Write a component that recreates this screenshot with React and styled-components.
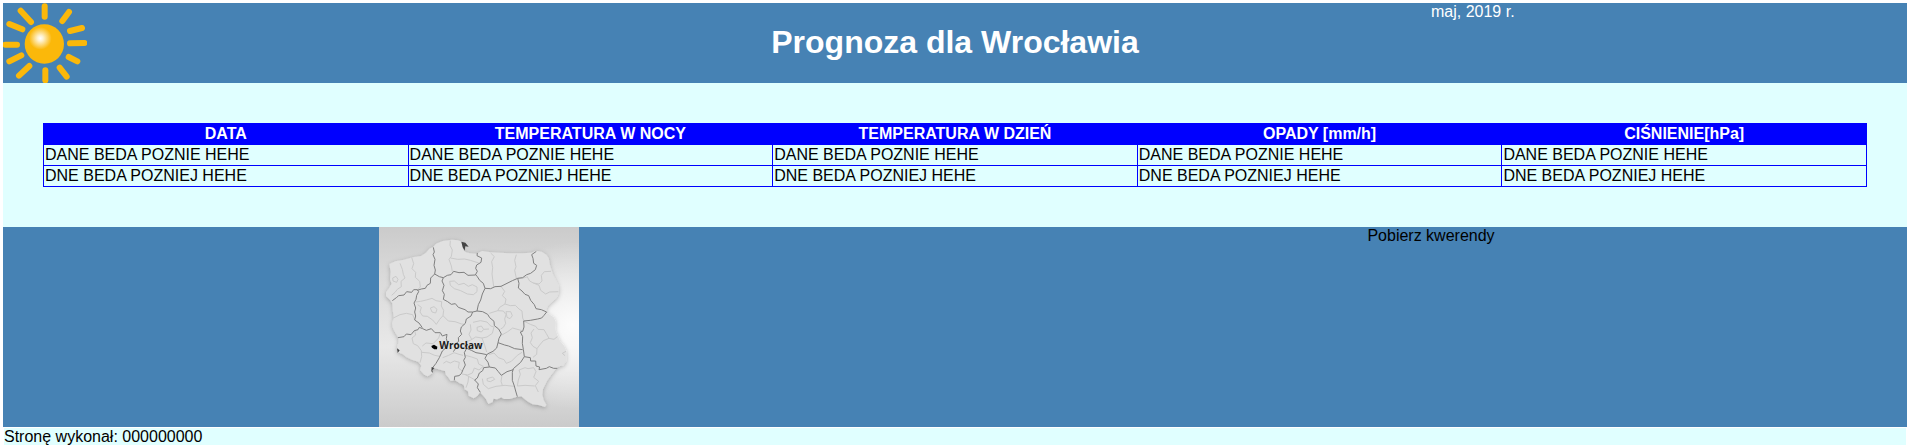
import React from "react";
import styled, { createGlobalStyle } from "styled-components";

const GlobalStyle = createGlobalStyle`
  body {
    margin: 3px 3px 0;
    background: #ffffff;
    font: 16px/18px "Liberation Sans", Arial, Helvetica, sans-serif;
    color: #000000;
  }
`;

const Banner = styled.header`
  display: grid;
  grid-template-columns: 1fr 2fr 1fr;
  height: 80px;
  background: steelblue;
  color: #ffffff;
`;

const Title = styled.h1`
  margin: 21px 0;
  font-size: 32px;
  line-height: 37px;
  text-align: center;
`;

const Main = styled.main`
  padding: 40px;
  background: lightcyan;
`;

const ForecastTable = styled.table`
  width: 100%;
  table-layout: fixed;
  border-collapse: collapse;
`;

const HeadCell = styled.th`
  padding: 1px;
  border: 1px solid blue;
  background: blue;
  color: #ffffff;
`;

const Cell = styled.td`
  padding: 1px;
  border: 1px solid blue;
`;

const Panels = styled.section`
  display: grid;
  grid-template-columns: 1fr 1fr;
  background: steelblue;
`;

const Panel = styled.div`
  display: flex;
  justify-content: center;
  align-items: flex-start;
`;

const DownloadLink = styled.a`
  color: inherit;
  text-decoration: none;
`;

const PageFooter = styled.footer`
  border: 1px solid #ffffff;
  border-bottom: 0;
  background: lightcyan;
  line-height: 17px;
`;

const Drawing = styled.svg`
  display: block;
`;

const rays = [
  [134, 19, 134, 50],
  [207, 36, 187, 63],
  [246, 84, 210, 93],
  [253, 129, 210, 130],
  [232, 184, 206, 171],
  [200, 230, 179, 203],
  [136, 241, 136, 211],
  [57, 227, 88, 198],
  [28, 184, 64, 166],
  [16, 134, 51, 134],
  [28, 72, 67, 88],
  [62, 32, 93, 66],
];

function Sun() {
  return (
    <Drawing width="84" height="80" viewBox="9 9 252 240" role="img" aria-label="Słońce">
      <defs>
        <radialGradient id="sunGlow" gradientUnits="userSpaceOnUse" cx="121" cy="115" r="34">
          <stop offset="0" stopColor="#ffffff" />
          <stop offset="0.25" stopColor="#fef2d0" />
          <stop offset="1" stopColor="#fbb80a" />
        </radialGradient>
      </defs>
      <g stroke="#fbb80a" strokeWidth="18" strokeLinecap="round">
        {rays.map(([x1, y1, x2, y2]) => (
          <line key={`${x1}-${y1}`} x1={x1} y1={y1} x2={x2} y2={y2} />
        ))}
      </g>
      <circle cx="133" cy="132" r="59" fill="url(#sunGlow)" />
    </Drawing>
  );
}

const outline =
  "M40 126 L58 118 L84 113 L110 106 L135 102 L150 92 L160 80 L172 74 L180 65 L200 57 L228 53 L246 55 L256 59 L260 74 L264 86 L270 91 L282 94 L302 95 L318 87 L345 91 L400 94 L440 94 L466 92 L480 86 L497 89 L511 98 L518 108 L522 130 L530 155 L541 178 L548 192 L549 210 L543 226 L530 238 L517 249 L510 262 L513 273 L533 286 L539 300 L537 322 L544 340 L552 357 L565 373 L572 390 L571 416 L562 430 L545 434 L530 452 L514 475 L501 501 L499 518 L503 534 L511 548 L507 555 L488 549 L470 547 L454 538 L436 523 L421 525 L401 531 L384 531 L376 526 L363 532 L352 530 L350 540 L337 546 L330 532 L322 521 L312 511 L304 522 L293 529 L278 521 L276 508 L266 502 L263 488 L250 483 L238 475 L224 477 L218 467 L210 458 L207 447 L188 442 L173 437 L168 445 L170 453 L155 463 L145 458 L132 444 L136 431 L127 419 L108 413 L90 404 L80 396 L64 390 L63 375 L68 360 L67 346 L58 332 L51 319 L48 304 L54 288 L51 270 L49 244 L43 235 L30 222 L30 211 L38 200 L47 185 L42 172 L44 150 Z";

const regionBorders = [
  "M172 76 L175 90 L171 98 L177 112 L174 130 L178 144 L176 156 L164 168 L163 184 L153 190 L148 199 L136 201 L124 205",
  "M49 236 L61 227 L68 221 L84 219 L92 209 L107 211 L113 203 L124 203 L128 209 L122 220 L120 232 L114 243 L119 258 L116 270 L119 282 L116 294 L129 303 L139 317",
  "M66 347 L84 344 L91 336 L105 338 L115 326 L126 323 L130 316 L140 320 L151 325 L166 320 L177 332 L193 332 L199 342 L213 337 L211 350 L215 364 L209 378 L199 387 L190 407 L180 424 L170 437",
  "M176 156 L190 164 L202 167 L214 160 L225 158 L233 148 L249 152 L264 151 L276 160 L298 159 L304 148 L299 139 L302 129 L315 121 L317 108 L303 101 L304 93",
  "M202 167 L198 177 L204 190 L199 206 L205 217 L202 232 L215 239 L226 247 L238 245 L247 256 L267 263 L276 270 L290 270 L303 267 L307 248 L314 234 L319 216 L327 199 L322 184 L311 175 L304 164 L299 158",
  "M327 199 L344 200 L357 194 L375 193 L393 184 L409 176 L425 169 L440 167 L452 158 L464 154 L478 143 L482 130 L473 124 L471 109 L467 98 L481 88",
  "M425 169 L429 184 L427 198 L438 207 L447 217 L458 221 L464 235 L475 248 L480 260 L496 263 L512 270 L504 280 L497 288 L485 291 L463 295 L443 297 L444 315 L440 328 L433 330 L440 344 L439 364 L442 382 L445 404 L434 421 L412 440 L409 451 L409 475 L415 492 L419 507 L424 524",
  "M303 267 L320 269 L335 277 L341 287 L354 298 L355 311 L368 321 L376 336 L369 349 L366 362 L386 369 L398 372 L416 380 L440 383",
  "M290 270 L285 282 L271 291 L268 304 L256 315 L253 327 L257 337 L247 347 L248 358 L236 368 L239 379 L232 389",
  "M272 379 L265 392 L268 406 L263 415 L268 429 L261 443 L256 455 L249 461 L236 463 L235 475",
  "M366 362 L362 378 L351 388 L334 396 L327 409 L336 421 L340 435 L323 437 L320 446 L310 453 L304 468 L296 474 L307 486 L304 497 L313 511",
  "M272 379 L286 385 L300 392 L318 395 L332 398",
  "M340 435 L358 438 L367 449 L376 460 L393 449 L412 443",
  "M445 404 L463 407 L464 417 L479 417 L480 432 L491 435 L489 443 L511 439 L520 434 L533 439 L544 439",
];

const districtBorders = [
  "M72 124 L79 142 L82 157 L87 168 L75 178 L76 194 L64 202 L57 211 L47 220",
  "M107 106 L113 125 L108 140 L119 151 L118 166 L131 178 L133 195 L124 204",
  "M50 168 L60 163 L66 172 L62 181 L51 177 Z",
  "M223 56 L222 70 L229 84 L226 103 L219 112 L226 132 L229 149",
  "M224 108 L245 112 L266 111 L283 115 L308 123",
  "M221 178 L235 177 L248 188 L264 184 L277 193 L289 188 L303 195 L303 209 L292 218 L274 216 L254 206 L235 200 L223 190 Z",
  "M344 93 L355 104 L347 119 L350 137 L348 156 L353 194",
  "M421 98 L416 115 L420 134 L416 145 L421 169",
  "M425 169 L442 168 L455 164 M525 148 L505 149 L496 160 L498 177 L489 186 L472 183 L461 177 L454 165",
  "M472 183 L489 190 L494 205 L509 216 L521 210 L547 209",
  "M375 193 L386 208 L379 221 L390 231 L387 246 L371 256 L365 266 L340 274",
  "M387 246 L403 251 L418 250 L429 261 L438 267 L440 288 L444 297",
  "M390 269 L404 269 L409 281 L402 290 L393 286 Z",
  "M365 266 L382 267 L390 278 L386 291 L389 304 L382 316 L374 321",
  "M118 240 L134 238 L151 234 L168 229 L180 236 L197 239 L196 252 L203 265 L201 281 L191 292 L181 307 L170 294 L154 283 L140 282 L132 270 L136 256 L125 248",
  "M163 258 L174 254 L183 262 L179 273 L168 270 Z",
  "M201 281 L217 297 L237 299 L257 306 L266 307",
  "M52 288 L72 278 L91 274 L110 278 L116 292",
  "M116 325 L119 339 L108 348 L112 365 L125 371 L136 386 L137 404 L132 422",
  "M139 372 L150 363 L171 365 L188 348 L193 333 M137 391 L160 393 L176 400 L191 403",
  "M291 301 L313 296 L333 300 L344 312 L354 315 L349 334 L333 345 L318 348 L299 345 L283 355 L269 358",
  "M303 316 L316 312 L323 322 L316 330 L304 326 Z",
  "M283 307 L285 324 L279 337 L287 352 M324 322 L339 321 M318 348 L326 370 L332 390",
  "M443 297 L463 307 L479 313 L486 322 L504 323 L511 335 L519 349 L502 356 L491 369 L483 380 L471 373 L463 362 L469 347 L465 333 L474 321",
  "M519 349 L534 352 L544 344 M483 380 L482 397 L471 406 M376 340 L395 329 L410 318 L438 326",
  "M338 398 L354 393 L367 407 L384 413 L391 424 L406 418 L424 400 L438 391",
  "M268 400 L287 405 L304 411 L308 426 L322 433 L309 444 L295 438 L289 453 L275 459 L258 456",
  "M200 407 L218 400 L234 392 L249 397 L261 400 M202 424 L211 418 L223 423 L235 417 L250 421 L247 438 L261 449",
  "M333 470 L350 465 L356 472 L343 479 L334 477 Z",
  "M319 470 L322 487 L337 500 L360 493 L387 490 L414 493 M378 460 L375 478 L379 490",
  "M424 492 L427 474 L433 457 L429 444 L447 437 L456 440 L473 437 L480 449 L473 466 L488 478 L478 491 L487 510 M424 492 L447 490 L476 492",
  "M268 458 L287 468 L297 474 M278 463 L276 480 L270 497 M567 401 L559 394 L570 388",
];

function PolandMap() {
  return (
    <Drawing width="200" height="200" viewBox="9 15 600 600" role="img" aria-label="Mapa Polski">
      <defs>
        <linearGradient id="mapBase" x1="0" y1="0" x2="0" y2="1">
          <stop offset="0" stopColor="#cbcbcb" />
          <stop offset="0.25" stopColor="#dadada" />
          <stop offset="0.6" stopColor="#e8e8e8" />
          <stop offset="1" stopColor="#cbcbcb" />
        </linearGradient>
        <radialGradient id="mapLight" gradientUnits="userSpaceOnUse" cx="590" cy="310" r="250">
          <stop offset="0" stopColor="#ffffff" stopOpacity="0.9" />
          <stop offset="1" stopColor="#ffffff" stopOpacity="0" />
        </radialGradient>
        <filter id="mapShadow" x="-10%" y="-10%" width="120%" height="120%">
          <feDropShadow dx="0" dy="4" stdDeviation="7" floodColor="#000000" floodOpacity="0.25" />
        </filter>
      </defs>
      <rect x="9" y="15" width="600" height="600" fill="url(#mapBase)" />
      <rect x="9" y="15" width="600" height="600" fill="url(#mapLight)" />
      <path d={outline} fill="#e1e1e1" filter="url(#mapShadow)" />
      <g fill="none" strokeLinejoin="round">
        <path d={districtBorders.join(" ")} stroke="#cacaca" strokeWidth="3" />
        <path d={regionBorders.join(" ")} stroke="#808080" strokeWidth="3" />
      </g>
      <path
        d="M256 59 L268 62 L278 74 L268 73 L266 86 L260 76 Z M63 379 L71 385 L65 393 Z M167 435 L175 438 L169 445 L171 453 L166 448 Z"
        fill="#444444"
      />
      <path d="M166 372 L174 368 L184 374 L183 382 L175 382 L168 377 Z" fill="#000000" />
      <text
        x="190"
        y="380"
        fontFamily="'Open Sans', 'Noto Sans', sans-serif"
        fontSize="30"
        fontWeight="700"
        fill="#1c1c1c"
      >
        Wrocław
      </text>
    </Drawing>
  );
}

const columns = ["DATA", "TEMPERATURA W NOCY", "TEMPERATURA W DZIEŃ", "OPADY [mm/h]", "CIŚNIENIE[hPa]"];
const rows = ["DANE BEDA POZNIE HEHE", "DNE BEDA POZNIEJ HEHE"];

export default function App() {
  return (
    <>
      <GlobalStyle />
      <Banner>
        <Sun />
        <Title>Prognoza dla Wrocławia</Title>
        <time dateTime="2019-05">maj, 2019 r.</time>
      </Banner>
      <Main>
        <ForecastTable>
          <thead>
            <tr>
              {columns.map((column) => (
                <HeadCell key={column} scope="col">{column}</HeadCell>
              ))}
            </tr>
          </thead>
          <tbody>
            {rows.map((text) => (
              <tr key={text}>
                {columns.map((column) => (
                  <Cell key={column}>{text}</Cell>
                ))}
              </tr>
            ))}
          </tbody>
        </ForecastTable>
      </Main>
      <Panels>
        <Panel>
          <PolandMap />
        </Panel>
        <Panel>
          <DownloadLink href="#kwerendy">Pobierz kwerendy</DownloadLink>
        </Panel>
      </Panels>
      <PageFooter>Stronę wykonał: 000000000</PageFooter>
    </>
  );
}
